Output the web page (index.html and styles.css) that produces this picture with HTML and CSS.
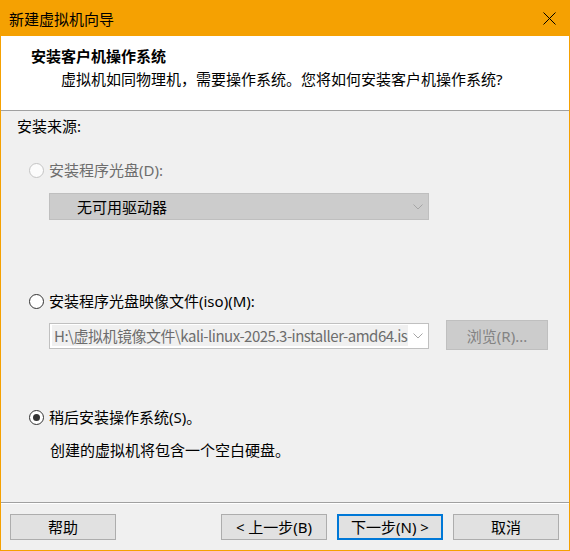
FILE: index.html
```html
<!DOCTYPE html>
<html lang="zh-CN">
<head>
<meta charset="utf-8">
<title>新建虚拟机向导</title>
<link rel="stylesheet" href="styles.css">
</head>
<body>
<div class="window">
  <div class="titlebar">
    <span class="title">新建虚拟机向导</span>
    <svg class="close" width="13" height="13" viewBox="0 0 13 13"><path d="M0.5 0.5 L12.5 12.5 M12.5 0.5 L0.5 12.5" stroke="#000" stroke-width="1" fill="none"/></svg>
  </div>
  <div class="header">
    <div class="h-title">安装客户机操作系统</div>
    <div class="h-sub">虚拟机如同物理机，需要操作系统。您将如何安装客户机操作系统?</div>
  </div>
  <div class="content">
    <div class="source-label">安装来源:</div>

    <div class="option opt1 disabled">
      <span class="radio radio-disabled"></span>
      <span class="label">安装程序光盘(D):</span>
    </div>
    <div class="select select-disabled">
      <span class="select-text">无可用驱动器</span>
      <svg class="chev" width="10" height="6" viewBox="0 0 10 6"><path d="M0.5 0.5 L5 5 L9.5 0.5" stroke="#a6a6a6" stroke-width="1" fill="none"/></svg>
    </div>

    <div class="option opt2">
      <span class="radio"></span>
      <span class="label">安装程序光盘映像文件(iso)(M):</span>
    </div>
    <div class="iso-row">
      <div class="input">
        <span class="input-text">H:\虚拟机镜像文件\kali-linux-2025.3-installer-amd64.is</span>
        <svg class="chev" width="10" height="6" viewBox="0 0 10 6"><path d="M0.5 0.5 L5 5 L9.5 0.5" stroke="#a6a6a6" stroke-width="1" fill="none"/></svg>
      </div>
      <div class="browse">浏览(R)...</div>
    </div>

    <div class="option opt3">
      <span class="radio radio-checked"></span>
      <span class="label">稍后安装操作系统(S)。</span>
    </div>
    <div class="desc">创建的虚拟机将包含一个空白硬盘。</div>
  </div>
  <div class="footer">
    <div class="btn">帮助</div>
    <div class="btn-group">
      <div class="btn">&lt; 上一步(B)</div>
      <div class="btn btn-default">下一步(N) &gt;</div>
      <div class="btn">取消</div>
    </div>
  </div>
</div>
</body>
</html>
```
FILE: styles.css
```css
* { box-sizing: border-box; }
html, body { margin: 0; padding: 0; }
body {
  width: 570px;
  height: 551px;
  overflow: hidden;
  font-family: "Noto Sans", "Noto Sans CJK SC", sans-serif;
  font-size: 15px;
  color: #000;
}
.window {
  width: 570px;
  height: 551px;
  border: 1px solid #f5a102;
  background: #f0f0f0;
  display: flex;
  flex-direction: column;
}
.titlebar {
  height: 35px;
  flex: none;
  background: #f5a102;
  display: flex;
  align-items: center;
  padding: 1px 13px 0 8px;
}
.title {
  line-height: 20px;
}
.close {
  margin-left: auto;
  display: block;
  margin-top: -2px;
}
.header {
  height: 75px;
  flex: none;
  background: #fff;
  border-bottom: 1px solid #a0a0a0;
  padding-top: 10px;
}
.h-title {
  font-weight: 700;
  line-height: 20px;
  padding-left: 30px;
}
.h-sub {
  line-height: 20px;
  padding-left: 60px;
  margin-top: 3px;
}
.content {
  flex: 1;
  display: flex;
  flex-direction: column;
  padding-top: 5px;
}
.source-label {
  line-height: 20px;
  padding-left: 16px;
}
.option {
  display: flex;
  align-items: center;
  height: 20px;
  padding-left: 28px;
}
.opt1 { margin-top: 24px; }
.opt2 { margin-top: 71px; }
.opt3 { margin-top: 57px; }
.label {
  margin-left: 5px;
  line-height: 20px;
  white-space: nowrap;
}
.disabled .label { color: #6d6d6d; }
.radio {
  width: 15px;
  height: 15px;
  border-radius: 50%;
  border: 1.5px solid #333;
  background: #fff;
  flex: none;
  display: flex;
  align-items: center;
  justify-content: center;
}
.radio-disabled {
  border-color: #c4c4c4;
  background: #fcfcfc;
}
.radio-checked::after {
  content: "";
  width: 7px;
  height: 7px;
  border-radius: 50%;
  background: #333;
}
.select {
  margin-top: 13px;
  margin-left: 48px;
  width: 380px;
  height: 27px;
  display: flex;
  align-items: center;
  padding: 0 5px 0 27px;
}
.select-disabled {
  background: #cccccc;
  border: 1px solid #bfbfbf;
}
.select-text { line-height: 20px; }
.chev { margin-left: auto; display: block; flex: none; }
.iso-row {
  margin-top: 9px;
  display: flex;
  align-items: center;
  padding-left: 48px;
  height: 30px;
}
.input {
  width: 380px;
  height: 26px;
  background: #fff;
  border: 1px solid #c0c0c0;
  display: flex;
  align-items: center;
  padding: 0 5px 0 2px;
  margin-top: 1px;
}
.input-text {
  display: block;
  white-space: nowrap;
  font-family: "Noto Sans CJK SC", sans-serif;
  letter-spacing: -0.5px;
  background: #f0f0f0;
  color: #6d6d6d;
  line-height: 21px;
  padding: 0 1px 0 2px;
}
.browse {
  margin-left: 17px;
  width: 102px;
  height: 30px;
  background: #cccccc;
  border: 1px solid #bfbfbf;
  color: #838383;
  display: flex;
  align-items: center;
  justify-content: center;
}
.desc {
  margin-top: 13px;
  padding-left: 49px;
  line-height: 20px;
}
.footer {
  flex: none;
  height: 48px;
  border-top: 1px solid #a0a0a0;
  box-shadow: inset 0 1px 0 #fff;
  display: flex;
  align-items: flex-start;
  padding: 11px 10px 10px 9px;
}
.btn-group {
  margin-left: auto;
  display: flex;
  gap: 10px;
}
.btn {
  width: 106px;
  height: 26px;
  background: #e1e1e1;
  border: 1px solid #adadad;
  display: flex;
  align-items: center;
  justify-content: center;
  line-height: 20px;
  white-space: nowrap;
}
.btn-default {
  border: 2px solid #0078d7;
}
```
